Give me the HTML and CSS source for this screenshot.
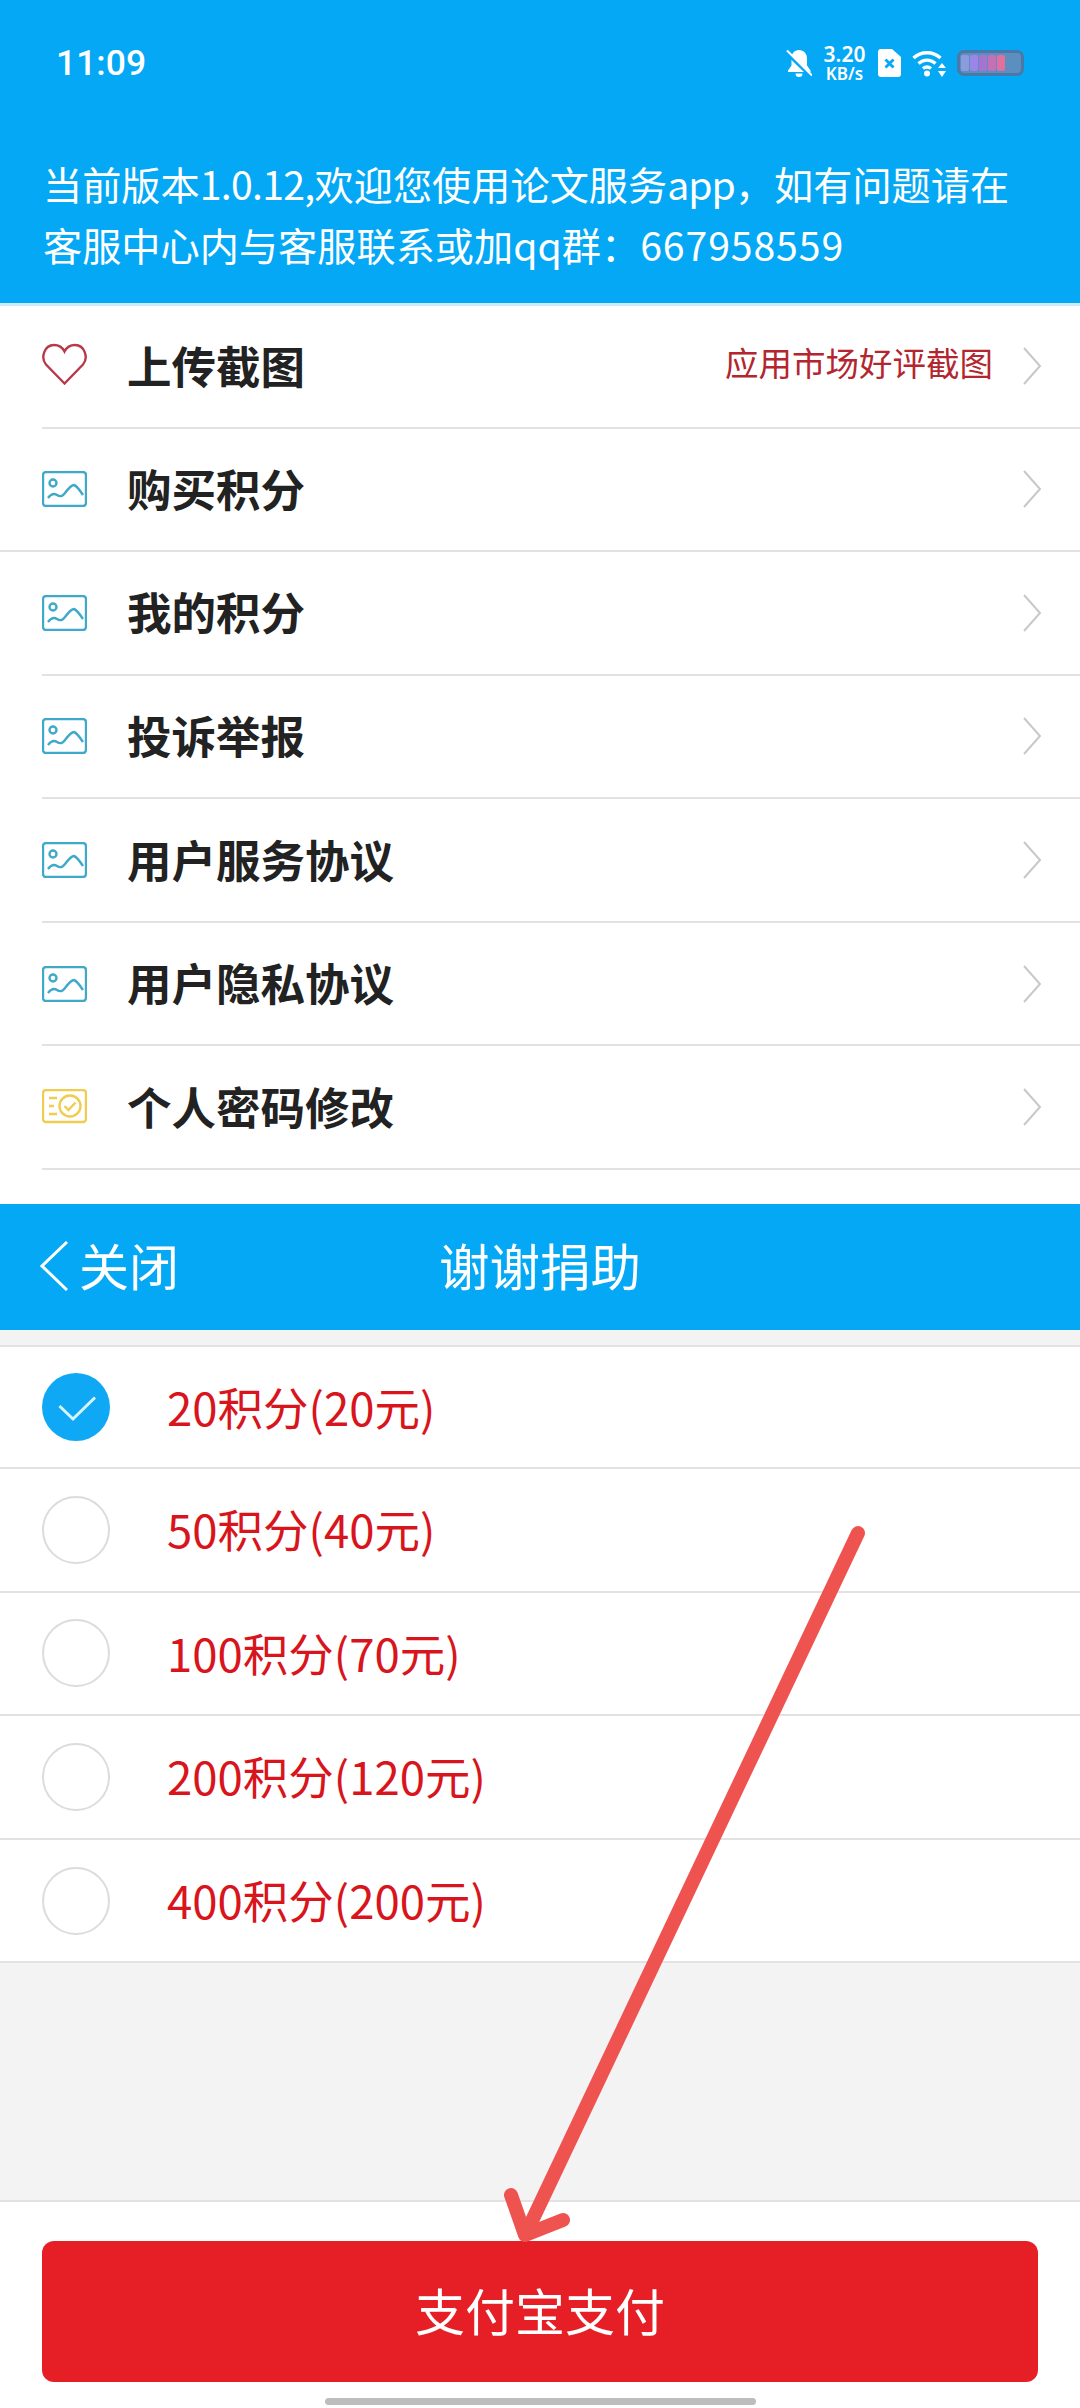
FILE: index.html
```html
<!DOCTYPE html>
<html lang="zh">
<head>
    <meta charset="UTF-8">
    <meta name="viewport" content="width=device-width, initial-scale=1.0">
    <title>谢谢捐助</title>
    <link rel="stylesheet" href="styles.css">
</head>

<body>
    <main class="page">
        <header class="top">
            <div class="status-bar">
                <span class="time">11:09</span>
                <div class="status-icons">
                    <svg class="ic-bell" viewBox="0 0 26 28">
                        <path fill="#fff" d="M13 1c5 0 8 3.600 8 8.500v7l3.500 5v1.500H2v-1.500l3.500-5v-7C5.500 4.600 8 1 13 1z"/>
                        <path fill="#fff" d="M9.500 24.500h7a3.500 3.500 0 0 1-7 0z"/>
                        <path stroke="#05a8f5" stroke-width="4" d="M0 3l26 25"/>
                        <path stroke="#fff" stroke-width="2" d="M1 1.500l25 25"/>
                    </svg>
                    <div class="speed"><span class="speed-num">3.20</span><span class="speed-unit">KB/s</span></div>
                    <svg class="ic-sim" viewBox="0 0 23 28">
                        <path fill="#fff" d="M3 0h11l9 8v17a3 3 0 0 1-3 3H3a3 3 0 0 1-3-3V3a3 3 0 0 1 3-3z"/>
                        <path stroke="#05a8f5" stroke-width="2.800" d="M7.500 10.500l8 8M15.500 10.500l-8 8"/>
                    </svg>
                    <svg class="ic-wifi" viewBox="0 0 34 28">
                        <g fill="none" stroke="#fff" stroke-width="3.400">
                            <path d="M1.500 9C9 2 21 2 28.500 9"/>
                            <path d="M6.500 14.500c5-4.500 12-4.500 17 0"/>
                            <path d="M11 19.500c2.500-2 5.500-2 8 0"/>
                        </g>
                        <circle cx="15" cy="24.500" r="3" fill="#fff"/>
                        <path fill="#fff" d="M30 14l4 5h-8zM30 28l4-6h-8z"/>
                    </svg>
                    <div class="battery">
                        <i class="cell c1"></i><i class="cell c2"></i><i class="cell c3"></i><i class="cell c4"></i><i class="cell c5"></i>
                    </div>
                </div>
            </div>
            <p class="notice">当前版本<span class="tight">1.0.12,</span>欢迎您使用论文服务<span class="tight-app">app</span>，如有问题请在<br>客服中心内与客服联系或加qq群：<span class="digits">667958559</span></p>
        </header>

        <ul class="menu">
            <li class="menu-row inset">
                <svg class="menu-icon heart" viewBox="0 0 45 42">
                    <path fill="none" stroke="#b8394a" stroke-width="2.400" d="M22.500 40.500L4 21.500C-1.500 15 2 2 12 2c5 0 8.500 2.500 10.500 6.500C24.500 4.500 28 2 33 2c10 0 13.500 13 8 19.500z"/>
                </svg>
                <span class="menu-title">上传截图</span>
                <span class="menu-note">应用市场好评截图</span>
                <svg class="chevron" viewBox="0 0 20 40"><path d="M2 2l16 18L2 38"/></svg>
            </li>
            <li class="menu-row">
                <svg class="menu-icon" viewBox="0 0 45 36"><use href="#pic"/></svg>
                <span class="menu-title">购买积分</span>
                <svg class="chevron" viewBox="0 0 20 40"><path d="M2 2l16 18L2 38"/></svg>
            </li>
            <li class="menu-row inset">
                <svg class="menu-icon" viewBox="0 0 45 36"><use href="#pic"/></svg>
                <span class="menu-title">我的积分</span>
                <svg class="chevron" viewBox="0 0 20 40"><path d="M2 2l16 18L2 38"/></svg>
            </li>
            <li class="menu-row inset">
                <svg class="menu-icon" viewBox="0 0 45 36"><use href="#pic"/></svg>
                <span class="menu-title">投诉举报</span>
                <svg class="chevron" viewBox="0 0 20 40"><path d="M2 2l16 18L2 38"/></svg>
            </li>
            <li class="menu-row inset">
                <svg class="menu-icon" viewBox="0 0 45 36"><use href="#pic"/></svg>
                <span class="menu-title">用户服务协议</span>
                <svg class="chevron" viewBox="0 0 20 40"><path d="M2 2l16 18L2 38"/></svg>
            </li>
            <li class="menu-row inset">
                <svg class="menu-icon" viewBox="0 0 45 36"><use href="#pic"/></svg>
                <span class="menu-title">用户隐私协议</span>
                <svg class="chevron" viewBox="0 0 20 40"><path d="M2 2l16 18L2 38"/></svg>
            </li>
            <li class="menu-row inset">
                <svg class="menu-icon" viewBox="0 0 45 36">
                    <g fill="none" stroke="#f0cc4f" stroke-width="2.400">
                        <rect x="1" y="1" width="43" height="32" rx="3"/>
                        <circle cx="28" cy="17" r="10.500"/>
                        <path d="M22.500 17l4 4 7-7.500"/>
                        <path d="M7 9h8M7 17h5M7 25h8"/>
                    </g>
                </svg>
                <span class="menu-title">个人密码修改</span>
                <svg class="chevron" viewBox="0 0 20 40"><path d="M2 2l16 18L2 38"/></svg>
            </li>
        </ul>

        <nav class="title-bar">
            <svg class="back" viewBox="0 0 28 50"><path d="M27 1L2 25l25 24"/></svg>
            <span class="back-text">关闭</span>
            <span class="bar-title">谢谢捐助</span>
        </nav>

        <section class="donate">
            <ul class="options">
                <li class="option">
                    <span class="radio checked">
                        <svg viewBox="0 0 68 68"><path d="M17.500 33l13.500 13 22-21.500"/></svg>
                    </span>
                    <span class="option-text">20积分(20元)</span>
                </li>
                <li class="option"><span class="radio"></span><span class="option-text">50积分(40元)</span></li>
                <li class="option"><span class="radio"></span><span class="option-text">100积分(70元)</span></li>
                <li class="option"><span class="radio"></span><span class="option-text">200积分(120元)</span></li>
                <li class="option"><span class="radio"></span><span class="option-text">400积分(200元)</span></li>
            </ul>
        </section>

        <footer class="pay-bar">
            <button class="pay-btn">支付宝支付</button>
            <div class="home-bar"></div>
        </footer>

        <svg class="arrow" viewBox="0 0 1080 2408">
            <path d="M858 1533L530 2225"/>
            <path d="M511 2195L525 2235L563 2220"/>
        </svg>

        <svg class="defs" width="0" height="0">
            <symbol id="pic" viewBox="0 0 45 36">
                <g fill="none" stroke="#3fa9c9" stroke-width="2.400">
                    <rect x="1" y="1" width="43" height="34" rx="3"/>
                    <circle cx="11" cy="12" r="3.500"/>
                    <path d="M6 27c3-4 6-5 9-3s5 2 8-2 6-8 9-8c3 1 7 7 9 10"/>
                </g>
            </symbol>
        </svg>
    </main>
</body>
</html>
```

FILE: styles.css
```css
* {
    box-sizing: border-box;
}

body {
    margin: 0;
    background: #fff;
    font-family: "Noto Sans CJK SC", "Noto Sans", sans-serif;
}

ul {
    list-style: none;
    margin: 0;
    padding: 0;
}

.page {
    position: relative;
    width: 1080px;
    height: 2408px;
    display: flex;
    flex-direction: column;
    overflow: hidden;
}

/* top header */
.top {
    height: 306px;
    flex: none;
    background: #05a8f5;
    border-bottom: 3px solid #cdeafa;
    color: #fff;
}

.status-bar {
    height: 126px;
    display: flex;
    align-items: center;
    justify-content: space-between;
    padding: 0 56px 0 56px;
}

.time {
    font-family: Roboto, sans-serif;
    font-size: 35.500px;
    font-weight: 500;
}

.status-icons {
    display: flex;
    align-items: center;
}

.ic-bell {
    width: 26px;
    height: 28px;
}

.speed {
    display: flex;
    flex-direction: column;
    align-items: center;
    margin-left: 11px;
    width: 43px;
    font-family: "Noto Sans", sans-serif;
    font-weight: 600;
    line-height: 1;
}

.speed-num {
    font-size: 21px;
}

.speed-unit {
    font-size: 17px;
}

.ic-sim {
    width: 23px;
    height: 28px;
    margin-left: 12px;
}

.ic-wifi {
    width: 34px;
    height: 28px;
    margin-left: 11px;
}

.battery {
    width: 67px;
    height: 26px;
    margin-left: 11px;
    padding: 2px 1px;
    display: flex;
    gap: 1px;
    background: #5b8fc0;
    border: 3px solid #4a78a8;
    border-radius: 7px;
}

.cell {
    width: 8px;
    border-radius: 2px;
}

.c1 { background: #8c9bdc; }
.c2 { background: #9a86e8; }
.c3 { background: #a673d0; }
.c4 { background: #c56fb4; }
.c5 { background: #e2709e; }

.notice {
    margin: 0;
    padding: 27px 0 0 43px;
    font-size: 39.200px;
    line-height: 61px;
    white-space: nowrap;
}

.tight {
    letter-spacing: -0.7px;
}

.tight-app {
    letter-spacing: -1px;
}

.digits {
    letter-spacing: 0.9px;
}

/* menu list */
.menu {
    flex: none;
    height: 898px;
    background: #fff;
}

.menu-row {
    height: 123.600px;
    display: flex;
    align-items: center;
    padding: 0 38px 0 42px;
    border-bottom: 2px solid #e2e2e2;
}

.menu-row:first-child {
    height: 122.500px;
}

.menu-row.inset {
    margin-left: 42px;
    padding-left: 0;
}

.menu-icon {
    width: 45px;
    height: 36px;
    flex: none;
}

.menu-icon.heart {
    height: 42px;
    margin-bottom: 4px;
}

.menu-title {
    margin-left: 40px;
    margin-bottom: 4px;
    flex: 1;
    font-size: 44.500px;
    font-weight: 700;
    color: #222;
}

.menu-note {
    font-size: 33.500px;
    color: #b3262f;
    margin-right: 29px;
    margin-bottom: 10px;
}

.chevron {
    width: 20px;
    height: 40px;
    flex: none;
}

.chevron path {
    fill: none;
    stroke: #c8c8c8;
    stroke-width: 2;
}

/* donate title bar */
.title-bar {
    position: relative;
    height: 126px;
    flex: none;
    display: flex;
    align-items: center;
    justify-content: center;
    background: #05a8f5;
    color: #fff;
}

.back {
    width: 28px;
    height: 50px;
    position: absolute;
    left: 40px;
    top: 37px;
}

.back path {
    fill: none;
    stroke: #fff;
    stroke-width: 3;
}

.back-text {
    position: absolute;
    left: 79px;
    top: 24px;
    font-size: 50px;
}

.bar-title {
    margin-bottom: 6px;
    font-size: 50.500px;
}

/* options */
.donate {
    flex: 1;
    padding-top: 15px;
    background: #f3f3f3;
}

.options {
    background: #fff;
    border-top: 2px solid #e2e2e2;
}

.option {
    height: 123.600px;
    display: flex;
    align-items: center;
    padding-left: 42px;
    border-bottom: 2px solid #e2e2e2;
}

.option:first-child {
    height: 122px;
}

.radio {
    width: 68px;
    height: 68px;
    flex: none;
    border: 2px solid #dcdcdc;
    border-radius: 50%;
}

.radio.checked {
    border: none;
    background: #0fa8f5;
}

.radio svg {
    display: block;
    width: 68px;
    height: 68px;
}

.radio svg path {
    fill: none;
    stroke: #d8f3ff;
    stroke-width: 3;
}

.option-text {
    margin-left: 57px;
    margin-bottom: 3px;
    font-size: 45.500px;
    color: #d8151c;
}

/* bottom pay button */
.pay-bar {
    height: 208px;
    flex: none;
    display: flex;
    flex-direction: column;
    align-items: center;
    padding-top: 39px;
    background: #fff;
    border-top: 2px solid #e2e2e2;
}

.pay-btn {
    width: 996px;
    height: 141px;
    flex: none;
    padding: 0 0 6px;
    border: none;
    border-radius: 12px;
    background: #e61e26;
    color: #fff;
    font-family: inherit;
    font-size: 50px;
}

.home-bar {
    width: 431px;
    height: 7px;
    flex: none;
    margin-top: 16px;
    border-radius: 4px;
    background: #bdbdbd;
}

/* hand drawn arrow on top */
.arrow {
    position: absolute;
    left: 0;
    top: 0;
    width: 1080px;
    height: 2408px;
    pointer-events: none;
}

.arrow path {
    fill: none;
    stroke: #ef5350;
    stroke-width: 14;
    stroke-linecap: round;
    stroke-linejoin: round;
}

.defs {
    position: absolute;
}
```
